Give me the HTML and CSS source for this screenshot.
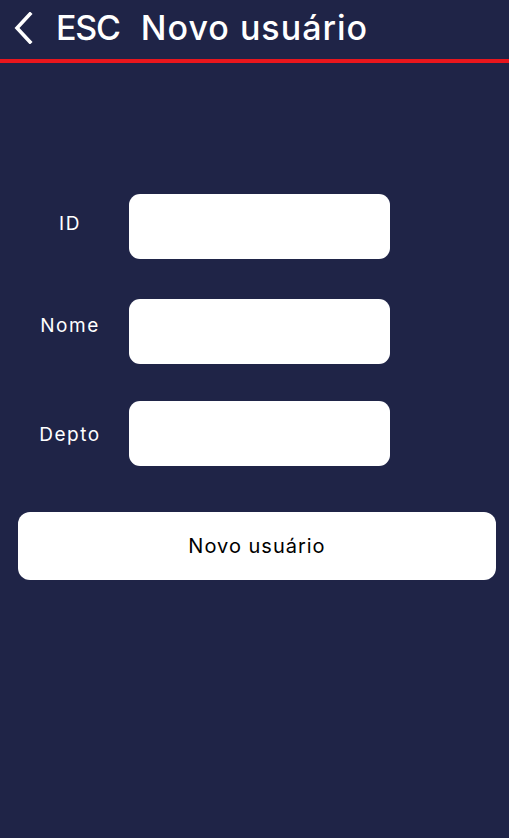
FILE: index.html
```html
<!DOCTYPE html>
<html lang="pt-BR">

<head>
    <meta charset="UTF-8" />
    <meta name="viewport" content="width=device-width, initial-scale=1.0" />
    <title>Novo usuário</title>
    <link rel="stylesheet" href="styles.css">
</head>

<body>
    <div id="app">
        <div class="topbar">
            <button class="back" aria-label="Voltar">
                <svg width="20" height="32" viewBox="0 0 20 32">
                    <path d="M16 2 L3 16 L16 30" fill="none" stroke="#fff" stroke-width="3.6" stroke-linecap="square" />
                </svg>
            </button>
            <span class="title title-esc">ESC</span>
            <span class="title title-main">Novo usuário</span>
        </div>

        <div class="form">
            <div class="row row-id">
                <label class="label label-id" for="id">ID</label>
                <input class="field" type="text" id="id" />
            </div>
            <div class="row row-nome">
                <label class="label label-nome" for="nome">Nome</label>
                <input class="field" type="text" id="nome" />
            </div>
            <div class="row row-depto">
                <label class="label label-depto" for="depto">Depto</label>
                <input class="field" type="text" id="depto" />
            </div>
            <button class="submit">Novo usuário</button>
        </div>
    </div>
</body>

</html>
```

FILE: styles.css
```css
* {
    box-sizing: border-box;
}

body {
    margin: 0;
    background-color: #1f2447;
    font-family: Inter, "Noto Sans", sans-serif;
    color: white;
}

#app {
    min-height: 100vh;
    width: 509px;
}

.topbar {
    height: 63px;
    display: flex;
    align-items: center;
    padding: 0 0 4px 14px;
    border-bottom: 4px solid #e8161d;
}

.back {
    background: none;
    border: none;
    padding: 0;
    margin-right: 22px;
    display: flex;
}

.title {
    font-size: 34px;
    font-weight: 500;
}

.title-esc {
    letter-spacing: -1.2px;
    margin-right: 21px;
}

.title-main {
    letter-spacing: 1px;
}

.form {
    padding: 131px 13px 0 18px;
    display: flex;
    flex-direction: column;
}

.row {
    display: flex;
    align-items: center;
}

.row-id {
    margin-bottom: 40px;
}

.row-nome {
    margin-bottom: 37px;
}

.row-depto {
    margin-bottom: 46px;
}

.label {
    width: 104px;
    margin-right: 7px;
    text-align: center;
    font-size: 19px;
    letter-spacing: 1.5px;
}

.label-id {
    margin-top: -6px;
}

.label-nome {
    margin-top: -12px;
}

.label-depto {
    margin-top: 2px;
}

.field {
    width: 261px;
    height: 65px;
    border: none;
    outline: none;
    border-radius: 11px;
    background-color: white;
}

.submit {
    width: 478px;
    height: 68px;
    border: none;
    border-radius: 12px;
    background-color: white;
    color: black;
    font-family: Inter, "Noto Sans", sans-serif;
    font-size: 20px;
    letter-spacing: 1px;
}
```
